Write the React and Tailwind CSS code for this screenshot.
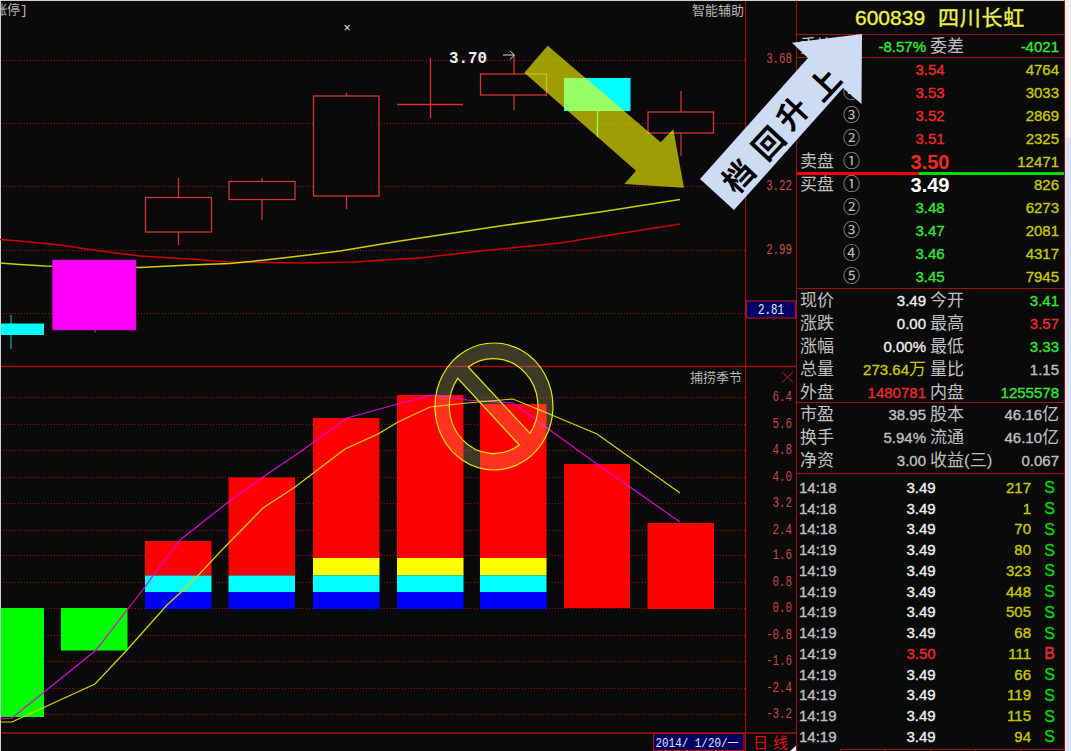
const upperGrid = [60.5, 123.5, 186.5, 250.5, 313.5];
const lowerGrid = [397.5, 424.5, 450.5, 477.5, 503.5, 530.5, 555.5, 582.5, 608.5, 635.5, 661.5, 688.5, 714.5];
const lowerLabels = ["6.4", "5.6", "4.8", "4.0", "3.2", "2.4", "1.6", "0.8", "0.0", "-0.8", "-1.6", "-2.4", "-3.2"];

const hollow = [
  { x: 145.5, w: 66, top: 197.5, bottom: 232, wx: 178.5, wt: 178, wb: 245 },
  { x: 229, w: 66, top: 181.5, bottom: 199.5, wx: 262, wt: 178, wb: 220 },
  { x: 313.5, w: 65.5, top: 96, bottom: 196, wx: 346.5, wt: 93, wb: 209 },
  { x: 480.5, w: 66, top: 74, bottom: 95, wx: 514, wt: 55, wb: 110 },
  { x: 648, w: 65.5, top: 112, bottom: 133, wx: 681, wt: 91, wb: 156 },
];

const macdBars = [
  { x: 145, w: 66.5, top: 541 },
  { x: 228.5, w: 66.5, top: 477.5 },
  { x: 313, w: 66.5, top: 418, yellow: true },
  { x: 397, w: 66.5, top: 395, yellow: true },
  { x: 480, w: 66.5, top: 404, yellow: true },
];

const maRed = "0,239.5 20,241 60,245 100,251 140,256 190,259 230,262 300,263 355,262 400,259 420,258 480,251 560,243 680,224";
const maYellow = "0,263 20,264.5 45,266 140,267.5 190,265 230,263.5 265,260 300,256 340,251 400,241 500,226 600,212 680,199.5";
const linePink = "0,719 12,718 95,651 100,645 127,610 145,587 152,577 180,540 227,503 263,477 300,452 347,418 398,404 433,395 467,400 513,403 547,428 597,464 680,522";
const lineYellow = "0,722 12,722 95,684 127,650 167,605 192,582 220,552 263,508 295,487 345,449 378,434 398,422 430,407 467,403 513,399 547,413 597,434 680,493";

const sell = [
  { n: "⑤", p: "3.54", v: "4764" },
  { n: "④", p: "3.53", v: "3033" },
  { n: "③", p: "3.52", v: "2869" },
  { n: "②", p: "3.51", v: "2325" },
];
const buy = [
  { n: "②", p: "3.48", v: "6273" },
  { n: "③", p: "3.47", v: "2081" },
  { n: "④", p: "3.46", v: "4317" },
  { n: "⑤", p: "3.45", v: "7945" },
];

const white = "text-[#f0f0f0]";
const gray = "text-[#c0c0c0]";
const red = "text-[#f02828]";
const green = "text-[#33e833]";
const yellow = "text-[#c8c800]";
// the source font is a hinted raster face, between regular and bold
const num = "[-webkit-text-stroke:0.35px_currentColor]";

const stats = [
  ["现价", "3.49", white, "今开", "3.41", green],
  ["涨跌", "0.00", white, "最高", "3.57", red],
  ["涨幅", "0.00%", white, "最低", "3.33", green],
  ["总量", "273.64万", yellow, "量比", "1.15", gray],
  ["外盘", "1480781", red, "内盘", "1255578", green],
];
const finance = [
  ["市盈", "38.95", gray, "股本", "46.16亿", gray],
  ["换手", "5.94%", gray, "流通", "46.10亿", gray],
  ["净资", "3.00", gray, "收益(三)", "0.067", gray],
];

const trades = [
  ["14:18", "3.49", "217", "S"],
  ["14:18", "3.49", "1", "S"],
  ["14:18", "3.49", "70", "S"],
  ["14:19", "3.49", "80", "S"],
  ["14:19", "3.49", "323", "S"],
  ["14:19", "3.49", "448", "S"],
  ["14:19", "3.49", "505", "S"],
  ["14:19", "3.49", "68", "S"],
  ["14:19", "3.50", "111", "B"],
  ["14:19", "3.49", "66", "S"],
  ["14:19", "3.49", "119", "S"],
  ["14:19", "3.49", "115", "S"],
  ["14:19", "3.49", "94", "S"],
];

// the chart font is tall and narrow, so squeeze the mono face horizontally
function Squeezed({ x, y, size = 14, sx = 0.77, anchor = "start", fill, weight, children }) {
  return (
    <text
      transform={`translate(${x} ${y}) scale(${sx} 1)`}
      fontSize={size}
      fill={fill}
      fontWeight={weight}
      textAnchor={anchor}
      xmlSpace="preserve"
    >
      {children}
    </text>
  );
}

function Chart() {
  const line = "#a01010";
  const dot = "#a80e0e";
  const candle = "#d83434";
  const axis = "#d04848";
  return (
    <svg width="796" height="751" className="block shrink-0 font-['Liberation_Mono','Noto_Sans_CJK_SC',monospace]">
      <rect x="0" y="0" width="796" height="1" fill="#d0d0d0" />
      <rect x="0" y="0" width="1" height="751" fill="#d0d0d0" />

      {upperGrid.concat(lowerGrid).map((y) => (
        <line key={y} x1="3" x2="745" y1={y} y2={y} stroke={dot} strokeWidth="1" strokeDasharray="1 2" shapeRendering="crispEdges" />
      ))}
      <line x1="1" x2="796" y1="366.5" y2="366.5" stroke={line} strokeWidth="1.3" />
      <line x1="1" x2="796" y1="733" y2="733" stroke={line} strokeWidth="1.3" />
      <line x1="745.5" x2="745.5" y1="1" y2="751" stroke={line} strokeWidth="1.2" />

      <polyline points={maRed} fill="none" stroke="#d00000" strokeWidth="1.5" />
      <polyline points={maYellow} fill="none" stroke="#d0d000" strokeWidth="1.5" />

      <line x1="11" x2="11" y1="315" y2="349" stroke="#00b0b0" strokeWidth="1.2" />
      <rect x="1" y="323.5" width="43" height="11.5" fill="#00ffff" />
      <line x1="95" x2="95" y1="330" y2="332.5" stroke={candle} strokeWidth="1.2" />
      <rect x="52.5" y="260" width="83.5" height="70" fill="#ff00ff" stroke="#c000c0" strokeWidth="0.6" />
      {hollow.map((c) => (
        <g key={c.x} stroke={candle} strokeWidth="1.3">
          <line x1={c.wx} x2={c.wx} y1={c.wt} y2={c.wb} />
          <rect x={c.x} y={c.top} width={c.w} height={c.bottom - c.top} fill="#0a0a0a" />
        </g>
      ))}
      <line x1="397" x2="463" y1="104.5" y2="104.5" stroke={candle} strokeWidth="1.6" />
      <line x1="430.5" x2="430.5" y1="58" y2="118" stroke={candle} strokeWidth="1.3" />
      <line x1="597.5" x2="597.5" y1="111" y2="137" stroke="#00ffff" strokeWidth="1.2" />
      <rect x="564" y="78" width="66.5" height="33" fill="#00ffff" />

      <text x="347" y="32" fontSize="12" fill="#f0f0f0" textAnchor="middle">×</text>
      <Squeezed x="449" y="63" size={17} sx={0.93} fill="#f0f0f0" weight="700">3.70</Squeezed>
      <path d="M503 55 H514 M510 51 L514.5 55 L510 59.5" fill="none" stroke="#d8d8d8" strokeWidth="1" />
      <text x="-6" y="14" fontSize="13" fill="#b8b8b8">涨停]</text>
      <text x="692" y="15" fontSize="13" fill="#b8b8b8">智能辅助</text>
      <text x="690" y="382" fontSize="13" fill="#b8b8b8">捕捞季节</text>
      <path d="M782 372 L793 382.5 M793 372 L782 382.5" stroke="#b02020" strokeWidth="1" />

      <Squeezed x="792" y="63" anchor="end" fill={axis}>3.68</Squeezed>
      <Squeezed x="792" y="190" anchor="end" fill={axis}>3.22</Squeezed>
      <Squeezed x="792" y="253.5" anchor="end" fill={axis}>2.99</Squeezed>
      <rect x="746.5" y="301" width="49" height="17" fill="#000066" stroke="#b01010" strokeWidth="1.2" />
      <Squeezed x="758" y="314" fill="#e0e8ff">2.81</Squeezed>

      {lowerLabels.map((t, i) => (
        <Squeezed key={t} x="792" y={lowerGrid[i] + 3} anchor="end" fill={axis}>{t}</Squeezed>
      ))}

      <rect x="1" y="608" width="43" height="109" fill="#00ff00" />
      <rect x="61" y="608" width="66.5" height="42.5" fill="#00ff00" />
      {macdBars.map((b) => (
        <g key={b.x}>
          <rect x={b.x} y={b.top} width={b.w} height={(b.yellow ? 558 : 575.5) - b.top} fill="#ff0000" />
          {b.yellow && <rect x={b.x} y="558" width={b.w} height="17.5" fill="#ffff00" />}
          <rect x={b.x} y="575.5" width={b.w} height="16.5" fill="#00ffff" />
          <rect x={b.x} y="592" width={b.w} height="17" fill="#0000ff" />
        </g>
      ))}
      <rect x="564" y="464" width="66" height="144" fill="#ff0000" />
      <rect x="647.5" y="523" width="66.5" height="86" fill="#ff0000" />
      <polyline points={linePink} fill="none" stroke="#e000e0" strokeWidth="1.2" />
      <polyline points={lineYellow} fill="none" stroke="#d8d800" strokeWidth="1.2" />

      <rect x="653.5" y="733.5" width="90.5" height="17" fill="#000060" stroke="#b01010" strokeWidth="1.2" />
      <Squeezed x="655.5" y="746.5" size={13} sx={0.84} fill="#e0e8ff">2014/ 1/20/一</Squeezed>
      <text x="753" y="747.5" fontSize="15" fill="#e01010">日</text>
      <text x="773" y="747.5" fontSize="15" fill="#e01010">线</text>
      <polygon points="797,745 797,751 790,751" fill="#f0f0f0" />
    </svg>
  );
}

// arrows and the ban sign sit on top of both the chart and the quote panel
function Overlay() {
  return (
    <svg width="1071" height="751" className="absolute left-0 top-0 font-['Noto_Sans_CJK_SC',sans-serif]">
      <polygon
        points="547.7,45.7 660.7,142.3 673.3,129.3 684,187.7 624.3,184 636,170.7 524.3,72.7"
        fill="#ffff00"
        fillOpacity="0.6"
      />
      <path
        d="M494 343 A59 63.5 0 1 1 493.9 343 Z M468.3 367 A44.5 47.5 0 0 1 530 433.3 Z M519.3 445 A44.5 47.5 0 0 1 457.7 378.3 Z"
        fillRule="evenodd"
        fill="#ffffa0"
        fillOpacity="0.2"
        stroke="#e8e800"
        strokeWidth="1.2"
      />
      <polygon points="700,179 808,58 792,42.7 862,34 861.5,104 843,88 734,210" fill="#cddcf2" />
      {[
        ["档", 737, 175],
        ["回", 767, 142],
        ["升", 791, 112],
        ["上", 823, 83],
      ].map(([ch, x, y]) => (
        <text
          key={ch}
          x={x}
          y={y}
          fontSize="31"
          fontWeight="700"
          fill="#000"
          textAnchor="middle"
          dominantBaseline="central"
          transform={`rotate(-47 ${x} ${y})`}
        >
          {ch}
        </text>
      ))}
    </svg>
  );
}

function QuoteRow({ label, n, price, priceClass, vol }) {
  return (
    <div className="flex items-center h-[23px] pr-[5px]">
      <span className={`w-[46px] pl-[3px] text-[17px] ${gray}`}>{label}</span>
      <span className={`w-[17px] text-[17px] leading-none ${gray}`}>{n}</span>
      <span className={`w-[140px] text-center ${num} ${priceClass}`}>{price}</span>
      <span className={`flex-1 text-right ${num} ${yellow}`}>{vol}</span>
    </div>
  );
}

function StatRow({ row }) {
  const [a, b, bc, c, d, dc] = row;
  const unit = b.endsWith("万");
  return (
    <div className="flex items-center h-[23px] pl-[3px] pr-[5px]">
      <span className={`w-[34px] text-[17px] ${gray}`}>{a}</span>
      <span className={`w-[92px] text-right ${num} ${bc}`}>
        {unit ? b.slice(0, -1) : b}
        {unit && <span className="text-[17px] [-webkit-text-stroke:0]">万</span>}
      </span>
      <span className={`ml-[4px] text-[17px] ${gray}`}>{c}</span>
      <span className={`flex-1 text-right ${num} ${dc}`}>
        {d.endsWith("亿") ? d.slice(0, -1) : d}
        {d.endsWith("亿") && <span className="text-[17px] [-webkit-text-stroke:0]">亿</span>}
      </span>
    </div>
  );
}

function QuotePanel() {
  return (
    <div className="w-[269px] shrink-0 h-[751px] flex flex-col border-l border-r border-t border-l-[#a01010] border-r-[#a01010] border-t-[#d0d0d0] text-[15px] leading-none font-['Liberation_Sans','Noto_Sans_CJK_SC',sans-serif]">
      <div className="h-[34px] shrink-0 flex items-center pl-[58px] gap-[13px] border-b border-[#a01010] text-[#f0f048]">
        <span className={`text-[21px] ${num}`}>600839</span>
        <span className={`text-[21px] tracking-[0.7px] ${num}`}>四川长虹</span>
      </div>

      <div className="h-[23px] shrink-0 flex items-center pl-[3px] pr-[5px] border-b border-[#a01010]">
        <span className={`w-[34px] text-[17px] ${gray}`}>委比</span>
        <span className={`w-[92px] text-right ${num} ${green}`}>-8.57%</span>
        <span className={`ml-[4px] text-[17px] ${gray}`}>委差</span>
        <span className={`flex-1 text-right ${num} ${green}`}>-4021</span>
      </div>

      {sell.map((r) => (
        <QuoteRow key={r.n} n={r.n} price={r.p} priceClass={red} vol={r.v} />
      ))}
      <div className="flex items-center h-[23px] pr-[5px]">
        <span className={`w-[46px] pl-[3px] text-[17px] ${gray}`}>卖盘</span>
        <span className={`w-[17px] text-[17px] leading-none ${gray}`}>①</span>
        <span className={`w-[140px] text-center font-bold text-[20px] ${red}`}>3.50</span>
        <span className={`flex-1 text-right ${num} ${yellow}`}>12471</span>
      </div>

      <div className="h-[3px] -mt-[1px] shrink-0 flex">
        <div className="w-[122px] bg-[#ff0000]" />
        <div className="flex-1 bg-[#00e000]" />
      </div>

      <div className="-mt-[2px] flex items-center h-[23px] pr-[5px]">
        <span className={`w-[46px] pl-[3px] text-[17px] ${gray}`}>买盘</span>
        <span className={`w-[17px] text-[17px] leading-none ${gray}`}>①</span>
        <span className="w-[140px] text-center font-bold text-[20px] text-white">3.49</span>
        <span className={`flex-1 text-right ${num} ${yellow}`}>826</span>
      </div>
      {buy.map((r) => (
        <QuoteRow key={r.n} n={r.n} price={r.p} priceClass={green} vol={r.v} />
      ))}

      <div className="h-[115px] shrink-0 border-t border-b border-[#a01010]">
        {stats.map((r) => (
          <StatRow key={r[0]} row={r} />
        ))}
      </div>
      <div className="h-[71px] shrink-0 border-b border-[#a01010]">
        {finance.map((r) => (
          <StatRow key={r[0]} row={r} />
        ))}
      </div>

      <div className="pt-[3px] pl-[2px]">
        {trades.map((t, i) => (
          <div key={i} className={`flex items-center h-[20.75px] ${num}`}>
            <span className={`w-[100px] ${gray}`}>{t[0]}</span>
            <span className={`w-[44px] text-center ${t[3] === "B" ? red : white}`}>{t[1]}</span>
            <span className={`w-[88px] text-right ${yellow}`}>{t[2]}</span>
            <span className={`flex-1 text-right pt-[2px] pr-[9px] text-[16px] ${t[3] === "B" ? red : "text-[#00d800]"}`}>{t[3]}</span>
          </div>
        ))}
      </div>

      <div className="mt-auto ml-[43px] h-[2px] flex border-t border-[#a01010]">
        <div className="w-[45px] border-l border-[#a01010]" />
        <div className="w-[45px] border-l border-[#a01010]" />
        <div className="w-[45px] border-l border-[#a01010]" />
        <div className="w-[45px] border-l border-[#a01010]" />
        <div className="flex-1 border-l border-[#a01010]" />
      </div>
    </div>
  );
}

export default function App() {
  return (
    <div className="relative w-[1071px] h-[751px] flex overflow-hidden bg-[#0a0a0a]">
      <Chart />
      <QuotePanel />
      <div className="flex-1 flex flex-col">
        <div className="h-[138px] bg-[#f0f0f0]" />
        <div className="flex-1 bg-[#d6e4f4]" />
      </div>
      <Overlay />
    </div>
  );
}
